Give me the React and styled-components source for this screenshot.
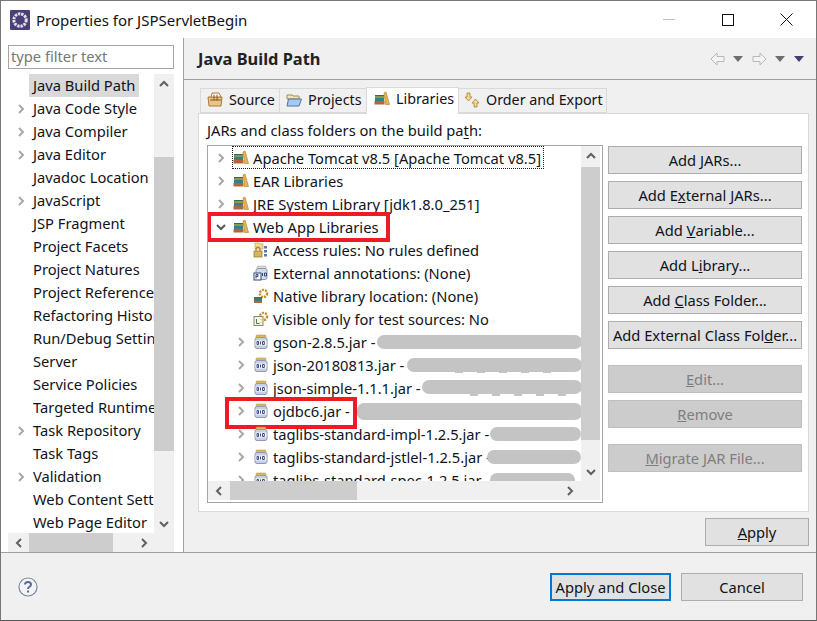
import React from 'react';
import styled, { createGlobalStyle } from 'styled-components';

const Global = createGlobalStyle`
  html, body { margin: 0; padding: 0; background: #fff; }
  * { box-sizing: border-box; }
  body { font-family: "Noto Sans", "Open Sans", sans-serif; font-size: 14.7px; color: #10131a; }
`;

const Window = styled.div`
  width: 817px;
  height: 621px;
  border: 1px solid #777;
  border-bottom: 1px solid #555;
  display: flex;
  flex-direction: column;
  overflow: hidden;
`;
const TitleBar = styled.div`
  height: 37px;
  display: flex;
  align-items: center;
  padding-left: 9px;
  background: #fff;
  flex: none;
`;
const TitleText = styled.div`
  margin-left: 6px;
  font-size: 15px;
  color: #111;
  flex: 1;
`;
const WinButton = styled.div`
  width: 59px;
  height: 37px;
  display: flex;
  align-items: center;
  justify-content: center;
`;
const Body = styled.div`
  flex: 1;
  display: flex;
  min-height: 0;
`;
const Side = styled.div`
  width: 183px;
  flex: none;
  border-right: 1px solid #a0a0a0;
  padding: 7px 9px 0 7px;
  display: flex;
  flex-direction: column;
`;
const Filter = styled.div`
  height: 24px;
  border: 1px solid #a5a5a5;
  padding-left: 2px;
  line-height: 21px;
  color: #777;
  flex: none;
`;
const SideTree = styled.div`
  margin-top: 5px;
  flex: 1;
  min-height: 0;
  display: grid;
  grid-template-columns: 146px 20px;
  grid-template-rows: 1fr 19px;
`;
const SideList = styled.div`
  overflow: hidden;
`;
const SideRow = styled.div`
  height: 23px;
  display: flex;
  align-items: center;
  padding-left: 6px;
  white-space: nowrap;
`;
const Arrow = styled.span`
  width: 13px;
  height: 16px;
  flex: none;
  display: flex;
  align-items: center;
  justify-content: center;
`;
const SideLabel = styled.span`
  margin-left: 2px;
  padding: 0 4px;
  line-height: 23px;
  background: ${p => (p.$selected ? '#d9d9d9' : 'transparent')};
`;
const VScroll = styled.div`
  background: #f0f0f0;
  display: flex;
  flex-direction: column;
  align-items: center;
  justify-content: space-between;
  min-height: 0;
`;
const VThumb = styled.div`
  flex: 1;
  width: 100%;
  margin: ${p => p.$margin};
  background: #cdcdcd;
`;
const ScrollBtn = styled.div`
  width: ${p => p.$w || '100%'};
  height: 19px;
  display: flex;
  align-items: center;
  justify-content: center;
  flex: none;
`;
const HScroll = styled.div`
  background: #f0f0f0;
  display: flex;
  align-items: center;
`;
const HThumb = styled.div`
  height: 100%;
  width: ${p => p.$w}px;
  background: #cdcdcd;
  flex: none;
`;
const ScrollCorner = styled.div`
  background: #f0f0f0;
`;
const Spring = styled.div`
  flex: 1;
`;
const Main = styled.div`
  flex: 1;
  background: #f0f0f0;
  display: flex;
  flex-direction: column;
  min-width: 0;
`;
const Header = styled.div`
  height: 42px;
  flex: none;
  border-bottom: 1px solid #a0a0a0;
  display: flex;
  align-items: center;
  padding: 0 12px 0 14px;
  justify-content: space-between;
`;
const Heading = styled.div`
  font-size: 16.4px;
  font-weight: 700;
  color: #222;
`;
const NavIcons = styled.div`
  display: flex;
  align-items: center;
  gap: 9px;
`;
const NavGroup = styled.div`
  display: flex;
  align-items: center;
  gap: 8px;
`;
const Tabs = styled.div`
  margin: 7px 0 0 16px;
  height: 26px;
  display: flex;
  align-items: flex-end;
  flex: none;
`;
const Tab = styled.div`
  width: ${p => p.$w}px;
  height: ${p => (p.$active ? '27px' : '25px')};
  padding: 0 0 ${p => (p.$active ? 5 : 2)}px ${p => p.$pl}px;
  background: ${p => (p.$active ? '#fff' : '#f0f0f0')};
  border: 1px solid #d9d9d9;
  border-bottom: ${p => (p.$active ? 'none' : '1px solid #d9d9d9')};
  display: flex;
  align-items: center;
  gap: 6px;
  font-size: 14.3px;
  white-space: nowrap;
  margin: 0 0 ${p => (p.$active ? '-1px' : '0')} ${p => (p.$first ? '0' : '-1px')};
  position: relative;
  z-index: ${p => (p.$active ? 1 : 0)};
`;
const Panel = styled.div`
  margin-left: 14px;
  width: 611px;
  height: 399px;
  background: #fff;
  border: 1px solid #d9d9d9;
  padding: 6px 6px 0 8px;
  flex: none;
`;
const PanelLabel = styled.div`
  line-height: 20px;
  u { text-underline-offset: 2px; }
`;
const PanelBody = styled.div`
  margin-top: 5px;
  display: flex;
  gap: 5px;
  align-items: flex-start;
`;
const TreeBox = styled.div`
  width: 396px;
  height: 358px;
  border: 1px solid #a5a5a5;
  display: grid;
  grid-template-columns: 1fr 19px;
  grid-template-rows: 1fr 19px;
  padding-right: 2px;
  padding-bottom: 2px;
`;
const TreeList = styled.div`
  overflow: hidden;
  min-width: 0;
`;
const TreeRow = styled.div`
  height: 23px;
  display: flex;
  align-items: center;
  white-space: nowrap;
  padding-left: ${p => p.$indent}px;
  position: relative;
`;
const RowItem = styled.span`
  margin-left: ${p => p.$gap}px;
  height: 21px;
  padding-right: 2px;
  display: flex;
  align-items: center;
  gap: 4px;
  outline: ${p => (p.$focus ? '1px dotted #222' : 'none')};
`;
const RowIcon = styled.span`
  width: 16px;
  height: 16px;
  flex: none;
  display: flex;
`;
const Smudge = styled.span`
  position: absolute;
  top: ${p => p.$top}px;
  left: ${p => p.$left}px;
  width: ${p => p.$w}px;
  height: ${p => p.$h}px;
  background: #c4c4c4;
  border-radius: 7px;
`;
const SmudgeTail = styled.span`
  position: absolute;
  top: 18px;
  left: ${p => p.$left}px;
  width: 100px;
  height: 2px;
  background: repeating-linear-gradient(90deg, #c4c4c4 0 8px, transparent 8px 22px);
`;
const RedBox = styled.div`
  position: absolute;
  left: ${p => p.$left}px;
  top: ${p => p.$top}px;
  width: ${p => p.$w}px;
  height: ${p => p.$h}px;
  border: 4px solid #ed1c24;
  pointer-events: none;
`;
const Buttons = styled.div`
  width: 194px;
  padding-top: 1px;
  display: flex;
  flex-direction: column;
  flex: none;
`;
const Button = styled.div`
  height: 28px;
  width: ${p => p.$w || '100%'};
  background: ${p => (p.$disabled ? '#cccccc' : '#e1e1e1')};
  border: 1px solid ${p => (p.$disabled ? '#bfbfbf' : p.$default ? '#0078d7' : '#adadad')};
  box-shadow: ${p => (p.$default ? 'inset 0 0 0 1px #0078d7' : 'none')};
  color: ${p => (p.$disabled ? '#7f7f7f' : '#10131a')};
  margin-top: ${p => p.$mt || 0}px;
  display: flex;
  align-items: center;
  justify-content: center;
  white-space: pre;
  flex: none;
`;
const ApplyRow = styled.div`
  flex: none;
  display: flex;
  justify-content: flex-end;
  padding: 6px 7px 0 0;
`;
const Footer = styled.div`
  height: 68px;
  flex: none;
  background: #f0f0f0;
  border-top: 1px solid #a0a0a0;
  display: flex;
  align-items: center;
  padding: 0 13px 0 17px;
`;
const FooterButtons = styled.div`
  margin-left: auto;
  display: flex;
  gap: 10px;
  margin-top: 1px;
`;

const Chevron = ({ dir = 'right', color = '#a8a8a8', size = 10 }) => {
  const d = {
    right: 'M3 1 L7 5 L3 9',
    left: 'M7 1 L3 5 L7 9',
    up: 'M1 7 L5 3 L9 7',
    down: 'M1 3 L5 7 L9 3',
  }[dir];
  return (
    <svg width={size} height={size} viewBox="0 0 10 10">
      <path d={d} fill="none" stroke={color} strokeWidth="2" />
    </svg>
  );
};

const LibIcon = () => (
  <svg width="16" height="16" viewBox="0 0 16 16">
    <rect x="1" y="4" width="9" height="3" fill="#8a9a4a" />
    <rect x="1" y="4" width="9" height="1" fill="#3d6a48" />
    <rect x="1" y="7" width="9" height="3" fill="#35808f" />
    <rect x="0.5" y="10" width="10" height="3.5" fill="#b5643a" />
    <path d="M10 2 L12 1 L15.5 13.5 L11.5 13.5 Z" fill="#e8b44e" stroke="#a87a24" strokeWidth="0.6" />
  </svg>
);

const JarIcon = () => (
  <svg width="16" height="16" viewBox="0 0 16 16">
    <rect x="3" y="1" width="10" height="2.5" rx="1" fill="#e0b65c" stroke="#b08a3c" strokeWidth="0.5" />
    <rect x="2" y="3.5" width="12" height="11" rx="2" fill="#c6d0e0" stroke="#8d9ab2" strokeWidth="1" />
    <rect x="2.5" y="6.5" width="11" height="5" fill="#f4f6fa" />
    <path d="M4 7.5h1.5v3H4zM7.5 7.5V10.5M9.5 7.5h1.8v3H9.5z" fill="none" stroke="#3a4c78" strokeWidth="1" />
  </svg>
);

const AccessIcon = () => (
  <svg width="16" height="16" viewBox="0 0 16 16">
    <path d="M2 1h4l1 1h3v5H2z" fill="#f0dc94" stroke="#c0a050" strokeWidth="0.7" />
    <path d="M3 9V7a2 2 0 0 1 4 0v2" fill="none" stroke="#8a6c2c" />
    <rect x="1" y="9" width="8" height="6" fill="#d8b45a" stroke="#96742c" strokeWidth="0.7" />
    <rect x="11" y="4" width="3" height="2.5" fill="#5a7cae" />
    <rect x="11" y="8" width="3" height="2.5" fill="#5a7cae" />
    <rect x="11" y="12" width="3" height="2.5" fill="#5a7cae" />
  </svg>
);

const AnnotIcon = () => (
  <svg width="16" height="16" viewBox="0 0 16 16">
    <rect x="4" y="1" width="9" height="2.5" rx="1" fill="#dcdcdc" stroke="#999" strokeWidth="0.5" />
    <rect x="3" y="3.5" width="11" height="11" rx="2" fill="#d4dbe6" stroke="#8d9ab2" />
    <rect x="1" y="8" width="7" height="7" fill="#fff" stroke="#334a78" />
    <path d="M3 13.5v-4h2v2h-2M9.5 8v3M11.5 8h2v3h-2z" fill="none" stroke="#334a78" />
  </svg>
);

const NativeIcon = () => (
  <svg width="16" height="16" viewBox="0 0 16 16">
    <circle cx="10.5" cy="5.5" r="3.6" fill="none" stroke="#c8902c" strokeWidth="2.4" strokeDasharray="2 1" />
    <circle cx="10.5" cy="5.5" r="1.4" fill="#fff" />
    <rect x="1" y="9" width="8" height="2" fill="#3d7a50" />
    <rect x="1" y="11" width="8" height="2" fill="#35808f" />
    <rect x="1" y="13" width="8" height="2" fill="#b5643a" />
  </svg>
);

const VisibleIcon = () => (
  <svg width="16" height="16" viewBox="0 0 16 16">
    <circle cx="10.5" cy="5.5" r="3.6" fill="none" stroke="#c8902c" strokeWidth="2.4" strokeDasharray="2 1" />
    <circle cx="10.5" cy="5.5" r="1.4" fill="#fff" />
    <rect x="1" y="5.5" width="9" height="9" fill="#f6f3e4" stroke="#8a8a68" />
    <path d="M3.5 8v4.5h3M8 8.5v.5M8 11.5v.5" fill="none" stroke="#4e7a4e" />
  </svg>
);

const SourceIcon = () => (
  <svg width="16" height="16" viewBox="0 0 16 16">
    <path d="M1 5h14l-1 9H2z" fill="#e8c488" stroke="#a87c3c" />
    <path d="M5 1h7l2 4H4z" fill="#fff" stroke="#a87c3c" />
    <path d="M7 2.5v6M10 2.5v6M3 8h11" stroke="#8a5a24" fill="none" />
  </svg>
);

const FolderIcon = () => (
  <svg width="16" height="16" viewBox="0 0 16 16">
    <path d="M1 3h5l1 1h6v3H1z" fill="#f2e6b4" stroke="#a08c4c" />
    <path d="M2.5 7H15.5l-2.5 7H1z" fill="#a8c8ec" stroke="#4c74a8" />
  </svg>
);

const OrderIcon = () => (
  <svg width="16" height="16" viewBox="0 0 16 16">
    <path d="M3 1h3v4h2L4.5 9 1 5h2z" fill="#f2d890" stroke="#a8842c" strokeWidth="0.8" />
    <path d="M10 15h3v-4h2l-3.5-4L8 11h2z" fill="#f2d890" stroke="#a8842c" strokeWidth="0.8" />
  </svg>
);

const NavArrow = ({ flip }) => (
  <svg width="15" height="14" viewBox="0 0 15 14" style={flip ? { transform: 'scaleX(-1)' } : undefined}>
    <path d="M1 7 L7 1 V4.5 H14 V9.5 H7 V13 Z" fill="#f4f4f4" stroke="#b8b8b8" />
  </svg>
);

const Caret = ({ color = '#6e6e6e' }) => (
  <svg width="10" height="6" viewBox="0 0 10 6">
    <path d="M0 0 H10 L5 6 Z" fill={color} />
  </svg>
);

const AppIcon = () => (
  <svg width="20" height="20" viewBox="0 0 20 20">
    <rect width="20" height="20" rx="1" fill="#4a3f78" />
    <circle cx="10" cy="10" r="6.2" fill="none" stroke="#e4e2e8" strokeWidth="3" strokeDasharray="2.4 0.9" />
  </svg>
);

const sideItems = [
  ['Java Build Path', false, true],
  ['Java Code Style', true],
  ['Java Compiler', true],
  ['Java Editor', true],
  ['Javadoc Location', false],
  ['JavaScript', true],
  ['JSP Fragment', false],
  ['Project Facets', false],
  ['Project Natures', false],
  ['Project References', false],
  ['Refactoring History', false],
  ['Run/Debug Settings', false],
  ['Server', false],
  ['Service Policies', false],
  ['Targeted Runtimes', false],
  ['Task Repository', true],
  ['Task Tags', false],
  ['Validation', true],
  ['Web Content Settings', false],
  ['Web Page Editor', false],
];

// smudge: left, width, top, height of the blurred-out part inside the row
const treeItems = [
  { label: 'Apache Tomcat v8.5 [Apache Tomcat v8.5]', icon: LibIcon, indent: 6, arrow: 'right', focus: true },
  { label: 'EAR Libraries', icon: LibIcon, indent: 6, arrow: 'right' },
  { label: 'JRE System Library [jdk1.8.0_251]', icon: LibIcon, indent: 6, arrow: 'right' },
  { label: 'Web App Libraries', icon: LibIcon, indent: 6, arrow: 'down', red: [-1, -3, 183, 30] },
  { label: 'Access rules: No rules defined', icon: AccessIcon, indent: 45 },
  { label: 'External annotations: (None)', icon: AnnotIcon, indent: 45 },
  { label: 'Native library location: (None)', icon: NativeIcon, indent: 45 },
  { label: 'Visible only for test sources: No', icon: VisibleIcon, indent: 45 },
  { label: 'gson-2.8.5.jar -', icon: JarIcon, indent: 26, arrow: 'right', smudge: [169, 205, 5, 14] },
  { label: 'json-20180813.jar -', icon: JarIcon, indent: 26, arrow: 'right', smudge: [199, 175, 5, 14], tail: 247 },
  { label: 'json-simple-1.1.1.jar -', icon: JarIcon, indent: 26, arrow: 'right', smudge: [214, 160, 4, 14], tail: 262 },
  { label: 'ojdbc6.jar -', icon: JarIcon, indent: 26, arrow: 'right', smudge: [149, 225, 4, 17], red: [17, -2, 132, 32] },
  { label: 'taglibs-standard-impl-1.2.5.jar -', icon: JarIcon, indent: 26, arrow: 'right', smudge: [282, 91, 5, 14] },
  { label: 'taglibs-standard-jstlel-1.2.5.jar -', icon: JarIcon, indent: 26, arrow: 'right', smudge: [279, 94, 5, 14] },
  { label: 'taglibs-standard-spec-1.2.5.jar -', icon: JarIcon, indent: 26, arrow: 'right', smudge: [282, 85, 5, 14] },
];

const actions = [
  [<>Add <u>J</u>ARs...</>, 0],
  [<>Add E<u>x</u>ternal JARs...</>, 7],
  [<>Add <u>V</u>ariable...</>, 7],
  [<>Add L<u>i</u>brary...</>, 7],
  [<>Add <u>C</u>lass Folder...</>, 7],
  [<>Add External Class Fol<u>d</u>er...</>, 7],
  [<><u>E</u>dit...</>, 16, true],
  [<><u>R</u>emove</>, 7, true],
  [<><u>M</u>igrate JAR File...</>, 16, true],
];

export default function App() {
  return (
    <Window>
      <Global />
      <TitleBar>
        <AppIcon />
        <TitleText>Properties for JSPServletBegin</TitleText>
        <WinButton>
          <svg width="12" height="1"><rect width="12" height="1" fill="#c0c0c0" /></svg>
        </WinButton>
        <WinButton>
          <svg width="12" height="12"><rect x="0.5" y="0.5" width="11" height="11" fill="none" stroke="#111" /></svg>
        </WinButton>
        <WinButton>
          <svg width="13" height="13"><path d="M0.5 0.5 L12.5 12.5 M12.5 0.5 L0.5 12.5" stroke="#111" /></svg>
        </WinButton>
      </TitleBar>
      <Body>
        <Side>
          <Filter>type filter text</Filter>
          <SideTree>
            <SideList>
              {sideItems.map(([label, arrow, selected]) => (
                <SideRow key={label}>
                  <Arrow>{arrow && <Chevron />}</Arrow>
                  <SideLabel $selected={selected}>{label}</SideLabel>
                </SideRow>
              ))}
            </SideList>
            <VScroll>
              <ScrollBtn><Chevron dir="up" color="#606060" /></ScrollBtn>
              <VThumb $margin="64px 0 63px" />
              <ScrollBtn><Chevron dir="down" color="#606060" /></ScrollBtn>
            </VScroll>
            <HScroll>
              <ScrollBtn $w="21px"><Chevron dir="left" color="#606060" /></ScrollBtn>
              <HThumb $w={84} />
              <Spring />
              <ScrollBtn $w="21px"><Chevron dir="right" color="#606060" /></ScrollBtn>
            </HScroll>
            <ScrollCorner />
          </SideTree>
        </Side>
        <Main>
          <Header>
            <Heading>Java Build Path</Heading>
            <NavIcons>
              <NavGroup><NavArrow /><Caret /></NavGroup>
              <NavGroup><NavArrow flip /><Caret /></NavGroup>
              <Caret color="#4a3a70" />
            </NavIcons>
          </Header>
          <Tabs>
            <Tab $first $w={80} $pl={6}><SourceIcon />Source</Tab>
            <Tab $w={88} $pl={6}><FolderIcon />Projects</Tab>
            <Tab $active $w={93} $pl={7}><LibIcon />Libraries</Tab>
            <Tab $w={149} $pl={5}><OrderIcon />Order and Export</Tab>
          </Tabs>
          <Panel>
            <PanelLabel>JARs and class folders on the build pa<u>t</u>h:</PanelLabel>
            <PanelBody>
              <TreeBox>
                <TreeList>
                  {treeItems.map(item => {
                    const Icon = item.icon;
                    return (
                      <TreeRow key={item.label} $indent={item.indent}>
                        {item.arrow && <Arrow><Chevron dir={item.arrow} color={item.arrow === 'down' ? '#555' : '#a8a8a8'} /></Arrow>}
                        <RowItem $gap={item.arrow ? 6 : 0} $focus={item.focus}>
                          <RowIcon><Icon /></RowIcon>
                          {item.label}
                        </RowItem>
                        {item.smudge && <Smudge $left={item.smudge[0]} $w={item.smudge[1]} $top={item.smudge[2]} $h={item.smudge[3]} />}
                        {item.tail && <SmudgeTail $left={item.tail} />}
                        {item.red && <RedBox $left={item.red[0]} $top={item.red[1]} $w={item.red[2]} $h={item.red[3]} />}
                      </TreeRow>
                    );
                  })}
                </TreeList>
                <VScroll>
                  <ScrollBtn><Chevron dir="up" color="#606060" /></ScrollBtn>
                  <VThumb $margin="2px 0 22px" />
                  <ScrollBtn><Chevron dir="down" color="#606060" /></ScrollBtn>
                </VScroll>
                <HScroll>
                  <ScrollBtn $w="22px"><Chevron dir="left" color="#606060" /></ScrollBtn>
                  <HThumb $w={127} />
                  <Spring />
                  <ScrollBtn $w="22px"><Chevron dir="right" color="#606060" /></ScrollBtn>
                </HScroll>
                <ScrollCorner />
              </TreeBox>
              <Buttons>
                {actions.map(([label, mt, disabled], i) => (
                  <Button key={i} $mt={mt} $disabled={disabled}>{label}</Button>
                ))}
              </Buttons>
            </PanelBody>
          </Panel>
          <ApplyRow>
            <Button $w="104px"><u>A</u>pply</Button>
          </ApplyRow>
          <Spring />
        </Main>
      </Body>
      <Footer>
        <svg width="20" height="20" viewBox="0 0 20 20">
          <circle cx="10" cy="10" r="9" fill="#f4f4f6" stroke="#7a8aa8" strokeWidth="1.2" />
          <path d="M7 7.5 C7 4 13 4 13 7.5 C13 10 10 9.5 10 12" fill="none" stroke="#5a6c90" strokeWidth="2" />
          <rect x="9" y="13.5" width="2" height="2" fill="#5a6c90" />
        </svg>
        <FooterButtons>
          <Button $w="121px" $default>Apply and Close</Button>
          <Button $w="122px">Cancel</Button>
        </FooterButtons>
      </Footer>
    </Window>
  );
}
